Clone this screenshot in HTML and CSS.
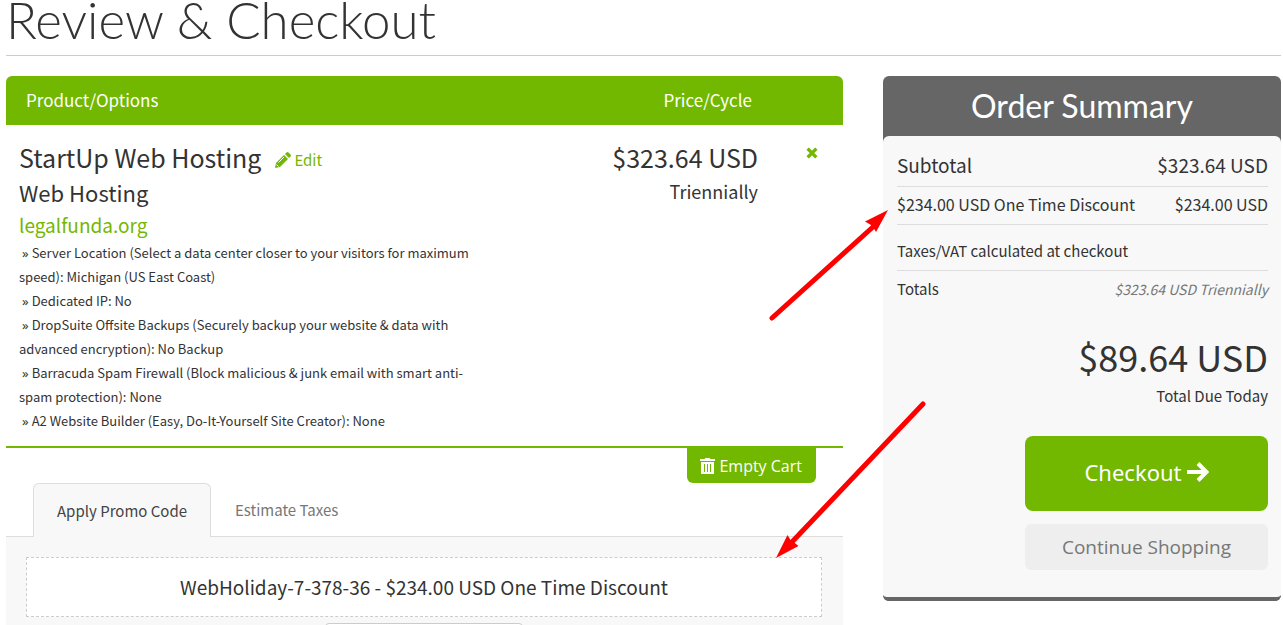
FILE: index.html
```html
<!DOCTYPE html>
<html lang="en">
<head>
<meta charset="utf-8">
<title>Review &amp; Checkout</title>
<link rel="stylesheet" href="styles.css">
</head>
<body>
<h1 class="page-title">Review &amp; Checkout</h1>
<main class="layout">
  <section class="cart">
    <table class="cart-table">
      <thead>
        <tr><th class="col-product">Product/Options</th><th class="col-price">Price/Cycle</th><th class="col-remove"></th></tr>
      </thead>
      <tbody>
        <tr>
          <td class="product">
            <div class="product-head">
              <h2 class="product-name">StartUp Web Hosting</h2>
              <a class="edit" href="#edit"><svg class="icon-pencil" viewBox="0 0 16 16" aria-hidden="true"><path d="M0 16l1-5L9 3l4 4-8 8zM10 2l1.500-1.500q1-1 2 0l2 2q1 1 0 2L14 6z"/><path class="pencil-cut" d="M3.500 10.500L9 5M1.500 12.500l2 2"/></svg>Edit</a>
            </div>
            <div class="product-group">Web Hosting</div>
            <a class="domain" href="#domain">legalfunda.org</a>
            <ul class="options">
              <li>Server Location (Select a data center closer to your visitors for maximum speed): Michigan (US East Coast)</li>
              <li>Dedicated IP: No</li>
              <li>DropSuite Offsite Backups (Securely backup your website &amp; data with advanced encryption): No Backup</li>
              <li>Barracuda Spam Firewall (Block malicious &amp; junk email with smart anti-spam protection): None</li>
              <li>A2 Website Builder (Easy, Do-It-Yourself Site Creator): None</li>
            </ul>
          </td>
          <td class="price"><div class="amount">$323.64 USD</div><div class="cycle">Triennially</div></td>
          <td class="remove"><button class="remove-button" type="button" aria-label="Remove item"><svg class="icon-x" viewBox="0 0 11 11" aria-hidden="true"><path d="M1.500 1.500l8 8M9.500 1.500l-8 8"/></svg></button></td>
        </tr>
      </tbody>
    </table>
    <div class="empty-row">
      <button class="empty-cart" type="button"><svg class="icon-trash" viewBox="0 0 15 16" aria-hidden="true"><path d="M0 1h4.500l1-1h4l1 1H15v2H0zM1 4h13v12H1z"/><path class="trash-bars" d="M4.500 6v8M7.500 6v8M10.500 6v8"/></svg>Empty Cart</button>
    </div>
    <div class="tabs" role="tablist">
      <button class="tab tab-active" type="button" role="tab" aria-selected="true">Apply Promo Code</button>
      <button class="tab" type="button" role="tab" aria-selected="false">Estimate Taxes</button>
    </div>
    <div class="promo-panel">
      <div class="promo">WebHoliday-7-378-36 - $234.00 USD One Time Discount</div>
      <button class="promo-remove" type="button" aria-label="Remove promotion code"></button>
    </div>
  </section>
  <aside class="summary">
    <h2 class="summary-title">Order Summary</h2>
    <div class="summary-body">
      <div class="line subtotal"><span>Subtotal</span><span>$323.64 USD</span></div>
      <div class="line discount"><span>$234.00 USD One Time Discount</span><span>$234.00 USD</span></div>
      <div class="line taxes"><span>Taxes/VAT calculated at checkout</span></div>
      <div class="line totals"><span>Totals</span><em class="recurring">$323.64 USD Triennially</em></div>
      <div class="due">$89.64 USD</div>
      <div class="due-label">Total Due Today</div>
      <div class="actions">
        <button class="checkout" type="button">Checkout<svg class="icon-arrow" viewBox="0 0 22 20" aria-hidden="true"><path d="M0 10h19M11 1.500l8.500 8.500-8.500 8.500"/></svg></button>
        <a class="continue" href="#shop">Continue Shopping</a>
      </div>
    </div>
  </aside>
</main>
<svg class="arrows" viewBox="0 0 1283 625" aria-hidden="true">
  <path class="shaft" d="M772 318L874 226M923 404L791 543"/>
  <path class="head" d="M888 210L865 221.500l6 3.500 2 2 3 5zM776 558l11.500-23 3 5 3 2 5 4z"/>
</svg>
</body>
</html>
```

FILE: styles.css
```css
* { box-sizing: border-box; }
body {
  position: relative;
  height: 100vh;
  margin: 0;
  padding: 0 2px 0 6px;
  overflow: hidden;
  background: #fff;
  color: #333;
  font: 16px/24px "Noto Sans CJK SC", "Noto Sans", sans-serif;
}
button { border: 0; padding: 0; background: none; color: inherit; font: inherit; cursor: pointer; }
a { color: #72b800; text-decoration: none; }
h1, h2 { margin: 0; font-weight: 400; }
svg { fill: currentColor; }
.page-title {
  height: 56px;
  margin-bottom: 20px;
  border-bottom: 1px solid #ccc;
  font: 300 51px/40px Lato, sans-serif;
}
.layout { display: grid; grid-template-columns: 837fr 398fr; gap: 40px; align-items: start; }

.cart-table { width: 100%; table-layout: fixed; border-collapse: separate; border-spacing: 0; border-bottom: 2px solid #72b800; }
.cart-table th { height: 49px; padding: 0 20px 2px; background: #72b800; color: #fff; font-size: 17px; font-weight: 400; text-align: left; }
.cart-table .col-product { width: 57%; border-top-left-radius: 6px; }
.cart-table .col-price { padding-right: 6px; text-align: right; }
.cart-table .col-remove { width: 85px; border-top-right-radius: 6px; }
.cart-table td { padding: 0; vertical-align: top; }
.cart-table .product { padding: 15px 10px 13px 13px; }
.product-head { display: flex; align-items: center; gap: 14px; }
.product-name { font-size: 25px; line-height: 34px; }
.edit { display: flex; align-items: center; gap: 3px; padding-top: 6px; font-size: 15px; }
.icon-pencil { width: 16px; height: 16px; }
.pencil-cut { fill: none; stroke: #fff; stroke-width: 1; }
.product-group { font-size: 22px; line-height: 36px; }
.domain { display: block; margin-bottom: 1px; font-size: 19px; line-height: 30px; }
.options { margin: 0; padding: 0; list-style: none; font-size: 13px; line-height: 24px; }
.options li::before { content: "»"; padding: 0 3px; font-family: "Noto Sans"; }
.price { text-align: right; }
.amount { padding-top: 15px; font-size: 25px; line-height: 34px; }
.cycle { font-size: 18px; line-height: 34px; }
.remove-button { display: block; margin: 22px auto 0 48px; }
.icon-x { display: block; width: 12px; height: 12px; fill: none; stroke: #72b800; stroke-width: 3; }
.empty-row { display: flex; justify-content: flex-end; padding-right: 27px; }
.empty-cart {
  display: flex; align-items: center; gap: 4px;
  height: 35px; padding: 0 14px 0 13px;
  border-radius: 0 0 6px 6px;
  background: #72b800; color: #fff;
  font: 16px/24px "Open Sans", sans-serif;
}
.icon-trash { width: 15px; height: 16px; }
.trash-bars { fill: none; stroke: #72b800; stroke-width: 1; }
.tabs { display: flex; padding-left: 27px; border-bottom: 1px solid #ddd; }
.tab { height: 54px; margin-bottom: -1px; padding: 0 24px; color: #777; font-size: 15px; }
.tab-active { padding: 0 23px; border: 1px solid #ddd; border-bottom: 0; border-radius: 6px 6px 0 0; background: #f8f8f8; color: #444; }
.promo-panel { display: flex; flex-direction: column; align-items: center; gap: 6px; padding: 20px 21px 20px 20px; background: #f8f8f8; }
.promo { width: 100%; padding: 14px; border: 1px dashed #ccc; background: #fff; font-size: 19px; line-height: 30px; text-align: center; }
.promo-remove { width: 198px; height: 34px; border: 1px solid #ccc; border-radius: 4px; background: #fff; }

.summary { border-radius: 6px; background: #666; }
.summary-title { color: #fff; font: 400 32px/60px Lato, sans-serif; text-align: center; }
.summary-body { padding: 10px 13px 27px 14px; border-bottom: 4px solid #666; border-radius: 6px; background: #f8f8f8; }
.line { display: flex; align-items: center; justify-content: space-between; border-bottom: 1px solid #ddd; }
.subtotal { height: 41px; padding-bottom: 3px; font-size: 19px; }
.discount { height: 38px; padding-bottom: 3px; }
.taxes { height: 46px; padding-top: 6px; font-size: 15px; }
.totals { height: 38px; padding-bottom: 2px; border: 0; font-size: 15px; }
.recurring { color: #777; font-size: 14px; }
.due { padding-top: 22px; font-size: 36px; line-height: 50px; text-align: right; }
.due-label { padding-bottom: 2px; font-size: 15px; line-height: 30px; text-align: right; }
.actions { display: flex; flex-direction: column; gap: 13px; width: 243px; margin: 23px 0 0 auto; }
.checkout {
  display: flex; align-items: center; justify-content: center; gap: 5px;
  height: 75px; padding-bottom: 3px; border-radius: 8px;
  background: #72b800; color: #fff;
  font: 22px/30px "Noto Sans", sans-serif;
}
.icon-arrow { width: 22px; height: 20px; fill: none; stroke: currentColor; stroke-width: 4; }
.continue { border-radius: 6px; background: #eee; color: #777; font: 19px/46px "Open Sans", sans-serif; text-align: center; }

.arrows { position: absolute; top: 0; left: 0; width: 1283px; height: 625px; pointer-events: none; }
.shaft { fill: none; stroke: #f00; stroke-width: 5; stroke-linecap: round; }
.head { fill: #f00; }
```
